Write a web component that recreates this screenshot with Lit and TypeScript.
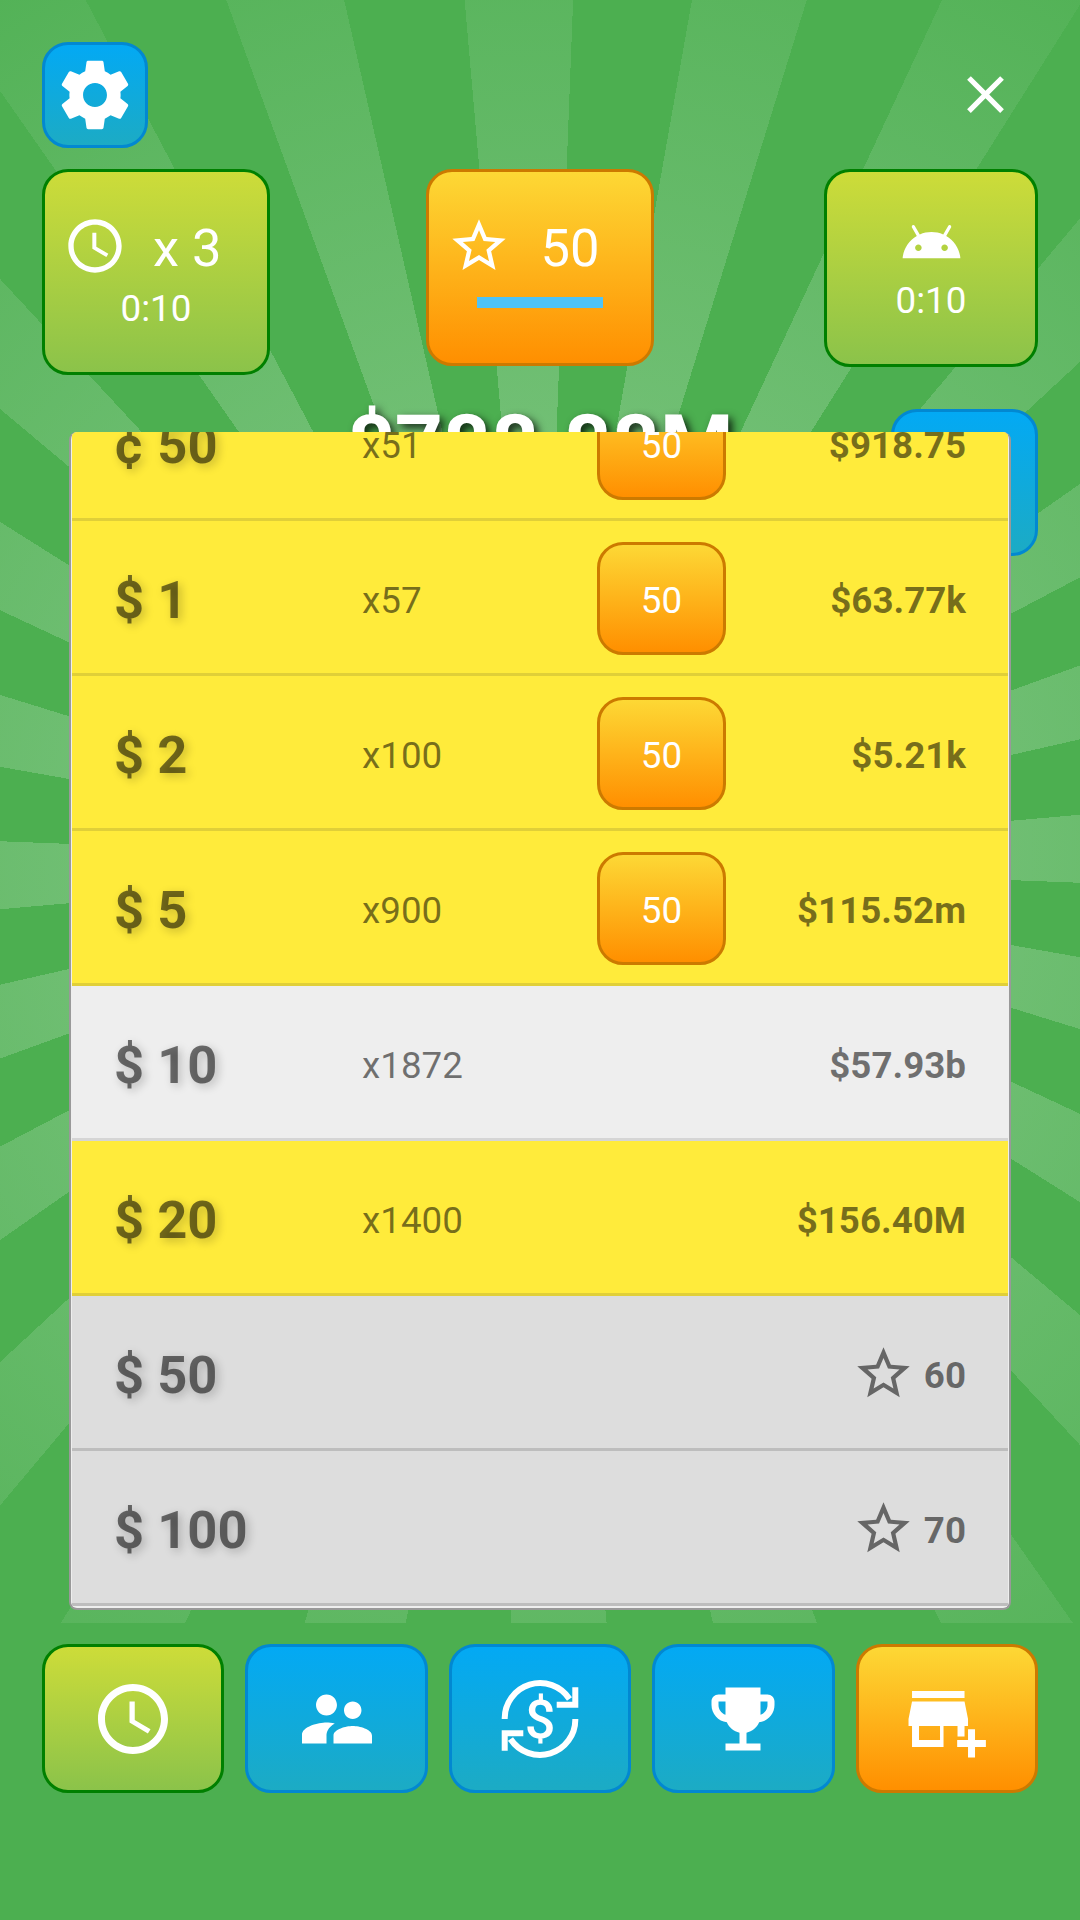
import { LitElement, html, svg, css, nothing } from 'lit';
import { customElement } from 'lit/decorators.js';

type Row = {
  label: string
  mult?: string
  cost?: string
  value?: string
  stars?: string
  tone: 'yellow' | 'light' | 'grey'
}

const ROWS: Row[] = [
  { label: '¢ 50', mult: 'x51', cost: '50', value: '$918.75', tone: 'yellow' },
  { label: '$ 1', mult: 'x57', cost: '50', value: '$63.77k', tone: 'yellow' },
  { label: '$ 2', mult: 'x100', cost: '50', value: '$5.21k', tone: 'yellow' },
  { label: '$ 5', mult: 'x900', cost: '50', value: '$115.52m', tone: 'yellow' },
  { label: '$ 10', mult: 'x1872', value: '$57.93b', tone: 'light' },
  { label: '$ 20', mult: 'x1400', value: '$156.40M', tone: 'yellow' },
  { label: '$ 50', stars: '60', tone: 'grey' },
  { label: '$ 100', stars: '70', tone: 'grey' },
];

const gear = html`<svg class="i82" viewBox="0 0 24 24"><path d="M19.43 12.98c.04-.32.07-.64.07-.98s-.03-.66-.07-.98l2.11-1.65c.19-.15.24-.42.12-.64l-2-3.46c-.12-.22-.39-.3-.61-.22l-2.49 1c-.52-.4-1.08-.73-1.69-.98l-.38-2.65C14.46 2.18 14.25 2 14 2h-4c-.25 0-.46.18-.49.42l-.38 2.65c-.61.25-1.17.59-1.69.98l-2.49-1c-.23-.09-.49 0-.61.22l-2 3.46c-.13.22-.07.49.12.64l2.11 1.65c-.04.32-.07.65-.07.98s.03.66.07.98l-2.11 1.65c-.19.15-.24.42-.12.64l2 3.46c.12.22.39.3.61.22l2.49-1c.52.4 1.08.73 1.69.98l.38 2.65c.03.24.24.42.49.42h4c.25 0 .46-.18.49-.42l.38-2.65c.61-.25 1.17-.59 1.69-.98l2.49 1c.23.09.49 0 .61-.22l2-3.46c.12-.22.07-.49-.12-.64l-2.11-1.65zM12 15.5c-1.93 0-3.5-1.57-3.5-3.5s1.57-3.5 3.5-3.5 3.5 1.57 3.5 3.5-1.57 3.5-3.5 3.5z"/></svg>`;
const closeIcon = html`<svg class="i63" viewBox="0 0 24 24"><path d="M19 6.41L17.59 5 12 10.59 6.41 5 5 6.41 10.59 12 5 17.59 6.41 19 12 13.41 17.59 19 19 17.59 13.41 12z"/></svg>`;
const clockPath = svg`<path d="M11.99 2C6.47 2 2 6.48 2 12s4.47 10 9.99 10C17.52 22 22 17.52 22 12S17.52 2 11.99 2zM12 20c-4.42 0-8-3.58-8-8s3.58-8 8-8 8 3.58 8 8-3.58 8-8 8zm.5-13H11v6l5.25 3.15.75-1.23-4.5-2.67z"/>`;
const starPath = svg`<path d="M22 9.24l-7.19-.62L12 2 9.19 8.63 2 9.24l5.46 4.73L5.82 21 12 17.27 18.18 21l-1.63-7.03L22 9.24zM12 15.4l-3.76 2.27 1-4.28-3.32-2.88 4.38-.38L12 6.1l1.71 4.04 4.38.38-3.32 2.88 1 4.28L12 15.4z"/>`;
const android = html`<svg class="i63" viewBox="0 0 24 24"><path d="M17.6 9.48l1.84-3.18c.16-.31.04-.69-.26-.85-.29-.15-.65-.06-.83.22l-1.88 3.24c-2.86-1.21-6.08-1.21-8.94 0L5.65 5.67c-.19-.29-.58-.38-.87-.2-.28.18-.37.54-.22.83L6.4 9.48C3.3 11.25 1.28 14.44 1 18h22c-.28-3.56-2.3-6.75-5.4-8.52zM7 15.25c-.69 0-1.25-.56-1.25-1.25s.56-1.25 1.25-1.25 1.25.56 1.25 1.25-.56 1.25-1.25 1.25zm10 0c-.69 0-1.25-.56-1.25-1.25s.56-1.25 1.25-1.25 1.25.56 1.25 1.25-.56 1.25-1.25 1.25z"/></svg>`;
const people = html`<svg class="i84" viewBox="0 0 24 24"><path d="M16.5 12c1.38 0 2.49-1.12 2.49-2.5S17.88 7 16.5 7C15.12 7 14 8.12 14 9.5s1.12 2.5 2.5 2.5zM9 11c1.66 0 2.99-1.34 2.99-3S10.66 5 9 5C7.34 5 6 6.34 6 8s1.34 3 3 3zm7.5 3c-1.83 0-5.5.92-5.5 2.75V19h11v-2.25c0-1.83-3.67-2.75-5.5-2.75zM9 13c-2.33 0-7 1.17-7 3.5V19h7v-2.25c0-.85.33-2.34 2.37-3.47C10.5 13.1 9.66 13 9 13z"/></svg>`;
const exchange = html`<svg class="i84" viewBox="0 0 84 84">
  <g fill="none" stroke="#fff" stroke-width="6">
    <path d="M6.7 42A35.3 35.3 0 0 1 71.5 22"/>
    <path d="M58.7 27.7H77.3V10.3"/>
    <path d="M77.3 42A35.3 35.3 0 0 1 12.5 62"/>
    <path d="M25.3 56.3H6.7V73.7"/>
  </g>
  <text class="dollar" x="42" y="60.5" text-anchor="middle">$</text>
</svg>`;
const trophy = html`<svg class="i84" viewBox="0 0 24 24"><path d="M19 5h-2V3H7v2H5c-1.1 0-2 .9-2 2v1c0 2.55 1.92 4.63 4.39 4.94.63 1.5 1.98 2.63 3.61 2.96V19H7v2h10v-2h-4v-3.1c1.63-.33 2.98-1.46 3.61-2.96C19.08 12.63 21 10.55 21 8V7c0-1.1-.9-2-2-2zM5 8V7h2v3.82C5.84 10.4 5 9.3 5 8zm14 0c0 1.3-.84 2.4-2 2.82V7h2v1z"/></svg>`;
const store = html`<svg class="store" viewBox="0 0 27.7 24"><path fill-rule="evenodd" d="M4 4h15v2H4zM4 7h15l1 5v2h-1v3h-2v-3h-4v6H4v-6H3v-2zM6 14v4h6v-4z"/><path d="M20 14.9h2v3.1h3.1v2H22v3h-2v-3h-3.1v-2H20z"/></svg>`;

@customElement('app-root')
export class AppRoot extends LitElement {
  static styles = css`

    * {
      box-sizing: border-box;
    }

    :host {
      display: block;
      font-family: Roboto, sans-serif;
    }

    svg {
      display: block;
      fill: #fff;
      flex: none;
    }

    .i63 { width: 63px; height: 63px; }
    .i64 { width: 64px; height: 64px; }
    .i82 { width: 82px; height: 82px; }
    .i84 { width: 84px; height: 84px; }
    .store { width: 97px; height: 84px; }

    .dollar {
      font-family: Roboto, sans-serif;
      font-size: 54px;
      font-weight: 500;
      fill: #fff;
    }

    .screen {
      width: 1080px;
      height: 1920px;
      overflow: hidden;
      padding: 42px 42px 0;
      background-color: #4caf50;
      background-image:
        radial-gradient(circle at 540px 862px, rgba(76, 175, 80, 0) 0, #4caf50 1160px),
        repeating-conic-gradient(from -5deg at 540px 862px, rgba(255, 255, 255, 0.33) 0 7.2deg, transparent 7.2deg 15deg);
      background-size: 1080px 1623px;
      background-repeat: no-repeat;
    }

    .btn {
      border: 3px solid;
      border-radius: 26px;
      color: #fff;
    }

    .blue {
      background: linear-gradient(#03a9f4, #1cabc4);
      border-color: #0288d1;
    }

    .green {
      background: linear-gradient(#cddc39, #8bc34a);
      border-color: #008000;
    }

    .orange {
      background: linear-gradient(#fdd835, #ff8f00);
      border-color: #cc7a00;
    }

    .top {
      display: flex;
      justify-content: space-between;
      align-items: center;
    }

    .gear {
      width: 106px;
      height: 106px;
      display: flex;
      align-items: center;
      justify-content: center;
    }

    .close {
      margin-right: 21px;
      margin-top: -2px;
    }

    .cards {
      display: flex;
      justify-content: space-between;
      align-items: flex-start;
      margin-top: 21px;
    }

    .card {
      display: flex;
      flex-direction: column;
      align-items: center;
    }

    .timer {
      width: 228px;
      height: 206px;
      padding-top: 42px;
    }

    .stars {
      width: 228px;
      height: 197px;
      padding-top: 42px;
      margin-right: 15px;
    }

    .ad {
      width: 214px;
      height: 198px;
      padding-top: 39px;
    }

    .head {
      display: flex;
      align-items: center;
      align-self: flex-start;
      height: 64px;
      padding-left: 18px;
      gap: 26px;
    }

    .stars .head {
      gap: 30px;
    }

    .big {
      font-size: 52.5px;
      line-height: 60px;
      margin-top: 4px;
    }

    .small {
      font-size: 36.75px;
      line-height: 37px;
    }

    .timer .small { margin-top: 12px; }
    .ad .small { margin-top: 8px; }

    .bar {
      width: 126px;
      height: 11px;
      margin-top: 19px;
      background: #4fc3f7;
    }

    .money-row {
      display: flex;
      justify-content: flex-end;
      position: relative;
      height: 147px;
      margin-top: 34px;
      margin-bottom: -124px;
    }

    .money {
      position: absolute;
      left: 0;
      right: 0;
      top: -5px;
      text-align: center;
      font-size: 84px;
      line-height: 84px;
      font-weight: 700;
      color: #fff;
      text-shadow: 4px 4px 8px rgba(0, 0, 0, 0.8);
    }

    .side {
      width: 147px;
      height: 147px;
    }

    .list {
      position: relative;
      height: 1178px;
      margin: 0 27px;
      overflow: hidden;
      border: 2px solid #999;
      border-top: 0;
      border-radius: 8px;
      padding: 0 1px 2px;
      background: #eee;
    }

    .rows {
      margin-top: -66px;
    }

    .row {
      display: grid;
      grid-template-columns: 248px 235px 129px 1fr;
      align-items: center;
      height: 155px;
      padding: 0 42px;
      border-bottom: 3px solid;
      color: rgba(0, 0, 0, 0.54);
    }

    .row.yellow {
      background: #ffeb3b;
      border-color: #e0cf38;
    }

    .row.light {
      background: #eee;
      border-color: #d5d5d5;
    }

    .row.grey {
      background: #ddd;
      border-color: #bdbdbd;
    }

    .label {
      font-size: 52.5px;
      font-weight: 700;
      margin-top: 6px;
      text-shadow: 3px 3px 10px rgba(0, 0, 0, 0.22);
    }

    .mult {
      font-size: 36.75px;
      margin-top: 6px;
    }

    .cost {
      display: flex;
      align-items: center;
      justify-content: center;
      height: 113px;
      margin-top: 3px;
      padding-top: 3px;
      font-size: 36.75px;
    }

    .value {
      grid-column: 4;
      display: flex;
      align-items: center;
      justify-content: flex-end;
      gap: 9px;
      margin-top: 6px;
      font-size: 36.75px;
      font-weight: 700;
      white-space: nowrap;
    }

    .value svg {
      fill: #666;
      margin-top: -4px;
    }

    .nav {
      display: grid;
      grid-template-columns: repeat(5, 1fr);
      gap: 21px;
      margin-top: 34px;
    }

    .nav .btn {
      height: 149px;
      display: flex;
      align-items: center;
      justify-content: center;
    }

  `;

  renderRow(row: Row) {
    return html`
      <div class="row ${row.tone}">
        <div class="label">${row.label}</div>
        <div class="mult">${row.mult ?? nothing}</div>
        ${row.cost ? html`<div class="cost btn orange">${row.cost}</div>` : html`<div></div>`}
        <div class="value">
          ${row.stars
            ? html`<svg class="i63" viewBox="0 0 24 24">${starPath}</svg>${row.stars}`
            : row.value}
        </div>
      </div>
    `;
  }

  render() {
    return html`
      <div class="screen">
        <div class="top">
          <div class="gear btn blue">${gear}</div>
          <div class="close">${closeIcon}</div>
        </div>

        <div class="cards">
          <div class="card timer btn green">
            <div class="head">
              <svg class="i64" viewBox="0 0 24 24">${clockPath}</svg>
              <span class="big">x 3</span>
            </div>
            <div class="small">0:10</div>
          </div>
          <div class="card stars btn orange">
            <div class="head">
              <svg class="i64" viewBox="0 0 24 24">${starPath}</svg>
              <span class="big">50</span>
            </div>
            <div class="bar"></div>
          </div>
          <div class="card ad btn green">
            ${android}
            <div class="small">0:10</div>
          </div>
        </div>

        <div class="money-row">
          <div class="money">$788.88M</div>
          <div class="side btn blue"></div>
        </div>

        <div class="list">
          <div class="rows">${ROWS.map((row) => this.renderRow(row))}</div>
        </div>

        <div class="nav">
          <div class="btn green"><svg class="i84" viewBox="0 0 24 24">${clockPath}</svg></div>
          <div class="btn blue">${people}</div>
          <div class="btn blue">${exchange}</div>
          <div class="btn blue">${trophy}</div>
          <div class="btn orange">${store}</div>
        </div>
      </div>
    `;
  }
}
